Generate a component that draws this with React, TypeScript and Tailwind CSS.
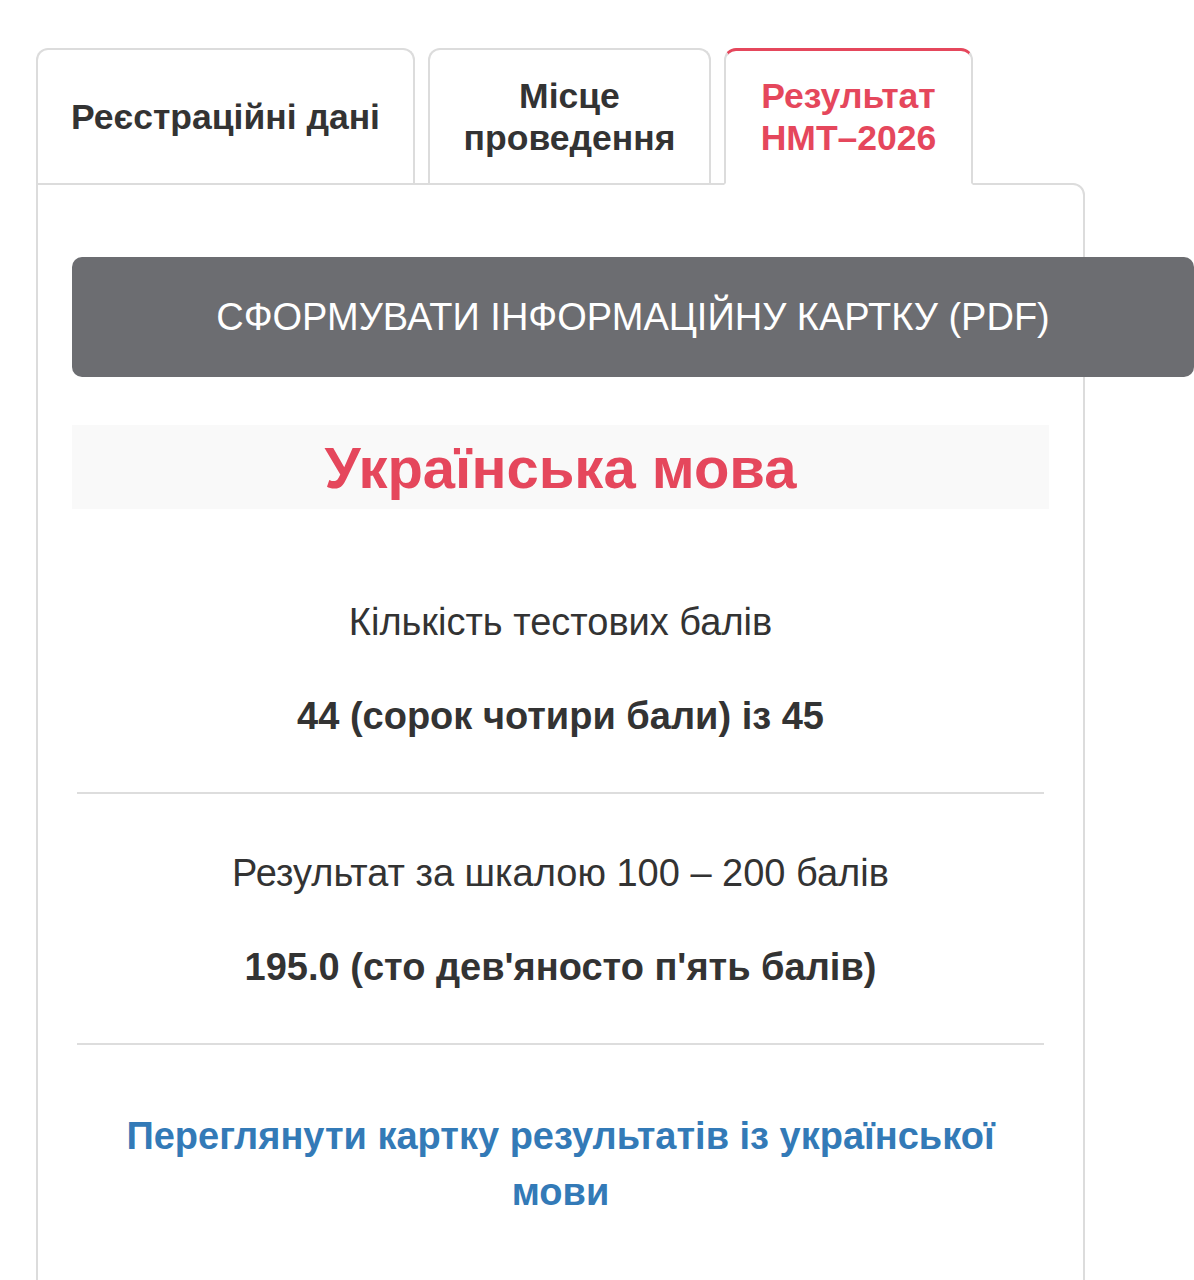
import React from 'react';

const tabs = [
  { label: ['Реєстраційні дані'], width: 'w-[379px]', active: false },
  { label: ['Місце', 'проведення'], width: 'w-[283px]', active: false },
  { label: ['Результат', 'НМТ–2026'], width: 'w-[249px]', active: true },
];

function Tab({ label, width, active }: { label: string[]; width: string; active: boolean }) {
  return (
    <div
      className={
        'flex h-[135px] items-center justify-center rounded-t-[12px] border-2 bg-white px-6 text-center text-[35.5px] font-bold leading-[42px] ' +
        width +
        (active
          ? ' relative z-10 -mb-[2px] h-[137px] border-[#dcdcdc] border-b-white border-t-[3px] border-t-[#e5475c] text-[#e5475c]'
          : ' border-[#dcdcdc] border-b-0 text-[#333]')
      }
    >
      <div>
        {label.map((l) => (
          <div key={l}>{l}</div>
        ))}
      </div>
    </div>
  );
}

function ScoreBlock({ label, value }: { label: string; value: string }) {
  return (
    <div className="px-[5px]">
      <div className="pb-[54px] pt-[57px] text-center text-[#333]">
        <p className="text-[38px] leading-[44px]">{label}</p>
        <p className="mt-[50px] text-[38px] font-bold leading-[44px]">{value}</p>
      </div>
      <hr className="border-t-2 border-[#dddddd]" />
    </div>
  );
}

export default function App() {
  return (
    <div
      className="min-h-screen overflow-hidden bg-white pl-9 pt-12"
      style={{ fontFamily: '"Liberation Sans", Arial, sans-serif' }}
    >
      {/* Tabs */}
      <div className="flex items-end gap-[13px]">
        {tabs.map((t) => (
          <Tab key={t.label.join(' ')} {...t} />
        ))}
      </div>

      {/* Panel */}
      <div className="min-h-[1200px] w-[1049px] rounded-tr-[12px] border-2 border-[#dcdcdc] px-[34px] pt-[72px]">
        <button className="flex h-[120px] w-[1122px] items-center justify-center rounded-[10px] bg-[#6c6d71] text-[38px] text-white">
          СФОРМУВАТИ ІНФОРМАЦІЙНУ КАРТКУ (PDF)
        </button>

        <div className="mt-[48px] flex h-[84px] items-center justify-center bg-[#f9f9f9]">
          <h2 className="text-[58px] font-bold text-[#e5475c]">Українська мова</h2>
        </div>

        <div className="mt-[34px]">
          <ScoreBlock label="Кількість тестових балів" value="44 (сорок чотири бали) із 45" />
          <ScoreBlock label="Результат за шкалою 100 – 200 балів" value="195.0 (сто дев'яносто п'ять балів)" />
        </div>

        <div className="px-[20px] pt-[63px] text-center">
          <a href="#" className="text-[38px] font-bold leading-[56px] text-[#337ab7]">
            Переглянути картку результатів із української мови
          </a>
        </div>
      </div>
    </div>
  );
}
